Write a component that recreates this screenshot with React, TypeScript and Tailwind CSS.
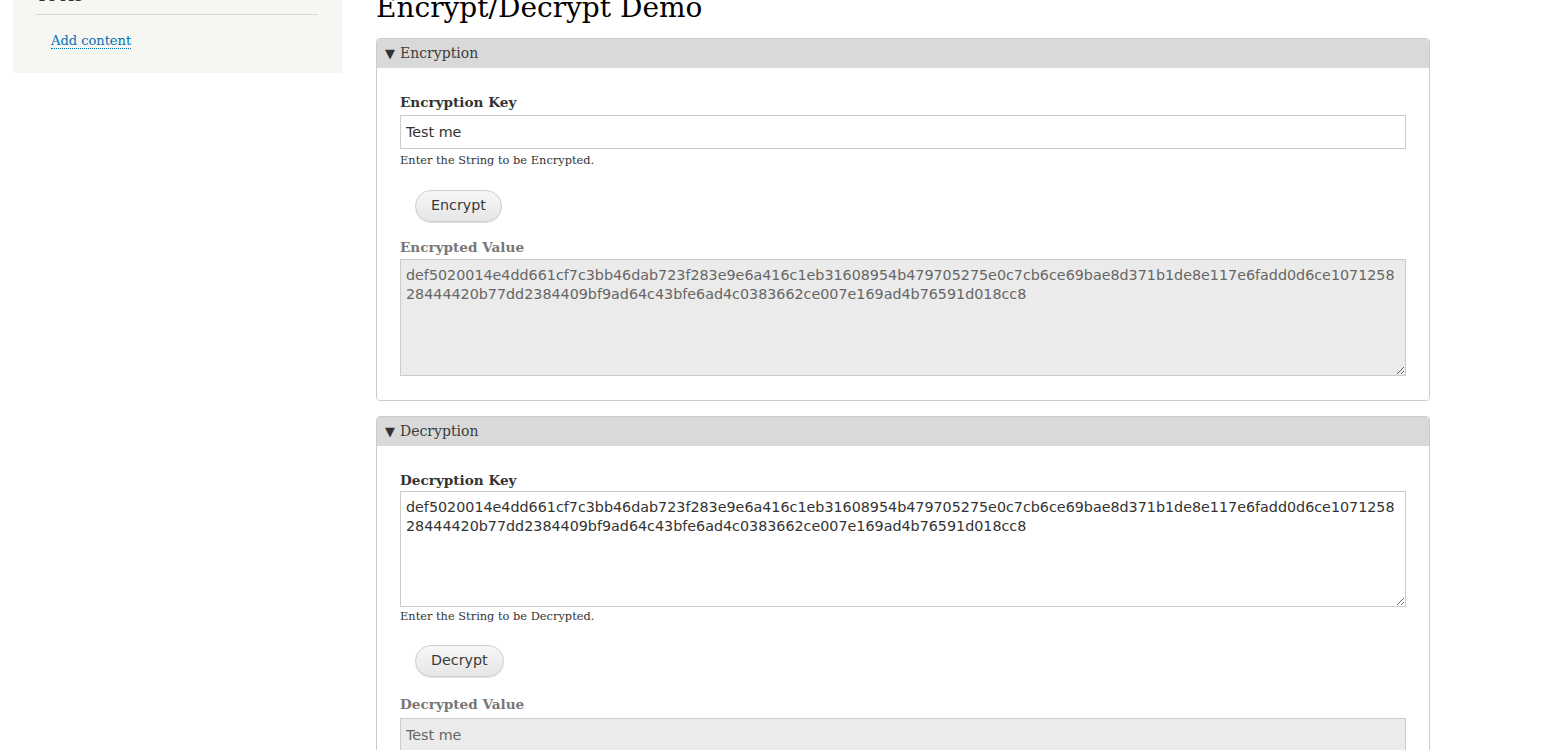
import { useState } from "react"

const serif = "font-['DejaVu_Serif',Georgia,serif]"
const sans = "font-['DejaVu_Sans',Verdana,sans-serif]"

const cipher =
  "def5020014e4dd661cf7c3bb46dab723f283e9e6a416c1eb31608954b479705275e0c7cb6ce69bae8d371b1de8e117e6fadd0d6ce1071258\n28444420b77dd2384409bf9ad64c43bfe6ad4c0383662ce007e169ad4b76591d018cc8"

function Panel({ title, children }: { title: string; children: React.ReactNode }) {
  return (
    <div className="border border-[#cccccc] rounded-[4px] overflow-hidden">
      <div className={`${serif} h-[29px] bg-[#d9d9d9] flex items-center pl-[8px] text-[14px] text-[#3b3b3b]`}>
        <span className="text-[13px] mr-[5px] text-[#333333]">▼</span>
        {title}
      </div>
      <div className="px-[23px] pt-[25px] pb-[24px] bg-white">{children}</div>
    </div>
  )
}

function Label({ text, muted, mb }: { text: string; muted?: boolean; mb: string }) {
  return (
    <div className={`${serif} font-bold text-[13.6px] leading-[18px] ${mb} ${muted ? "text-[#777777]" : "text-[#333333]"}`}>
      {text}
    </div>
  )
}

function Btn({ text }: { text: string }) {
  return (
    <button className={`${sans} ml-[15px] h-[32px] px-[15px] rounded-full border border-[#cfcfcf] bg-gradient-to-b from-[#f7f7f7] to-[#e6e6e6] text-[14.3px] text-[#3a3a3a] shadow-[0_1px_0_#e0e0e0]`}>
      {text}
    </button>
  )
}

export default function App() {
  const [key, setKey] = useState("Test me")
  const [dkey, setDkey] = useState(cipher)

  return (
    <div className="min-h-screen bg-white flex items-start overflow-hidden">
      {/* SIDEBAR */}
      <div className="ml-[13px] w-[329px] -mt-[18px] bg-[#f6f6f2] px-[23px] pb-[22px] shrink-0">
        <h2 className={`${serif} text-[18px] leading-[22px] pt-[2px] text-[#333333] border-b border-[#d6d6d6] pb-[8px] mr-[1px]`}>
          Tools
        </h2>
        <div className="pt-[15px] pl-[15px] text-[13px] leading-[20px]">
          <a
            href="#"
            className={`${serif} text-[13px] text-[#0071b3] border-b border-dotted border-[#0071b3]`}
          >
            Add content
          </a>
        </div>
      </div>

      {/* MAIN */}
      <div className="ml-[34px] w-[1054px] shrink-0 -mt-[10px]">
        <h1 className={`${serif} text-[28px] leading-[36px] text-[#000000] mb-[12px]`}>Encrypt/Decrypt Demo</h1>

        <Panel title="Encryption">
          <Label text="Encryption Key" mb="mb-[4px]" />
          <input
            value={key}
            onChange={e => setKey(e.target.value)}
            className={`${sans} block w-full h-[34px] border border-[#cccccc] px-[5px] text-[14.3px] text-[#333333] outline-none`}
          />
          <div className={`${serif} text-[11.4px] leading-[16px] text-[#333333] mt-[3px]`}>Enter the String to be Encrypted.</div>
          <div className="mt-[22px] mb-[16px] h-[32px] flex">
            <Btn text="Encrypt" />
          </div>
          <Label text="Encrypted Value" muted mb="mb-[3px]" />
          <textarea
            readOnly
            wrap="off"
            value={cipher}
            className={`${sans} block w-full h-[117px] border border-[#cccccc] bg-[#ebebeb] px-[5px] pt-[6px] text-[14.3px] leading-[19px] text-[#666666] overflow-hidden outline-none`}
          />
        </Panel>

        <div className="h-[15px]" />

        <Panel title="Decryption">
          <Label text="Decryption Key" mb="mb-[2px]" />
          <textarea
            wrap="off"
            value={dkey}
            onChange={e => setDkey(e.target.value)}
            className={`${sans} block w-full h-[116px] border border-[#cccccc] bg-white px-[5px] pt-[6px] text-[14.3px] leading-[19px] text-[#333333] overflow-hidden outline-none`}
          />
          <div className={`${serif} text-[11.4px] leading-[16px] text-[#333333] mt-[1px]`}>Enter the String to be Decrypted.</div>
          <div className="mt-[21px] mb-[18px] h-[32px] flex">
            <Btn text="Decrypt" />
          </div>
          <Label text="Decrypted Value" muted mb="mb-[5px]" />
          <input
            readOnly
            value="Test me"
            className={`${sans} block w-full h-[34px] border border-[#cccccc] bg-[#ebebeb] px-[5px] text-[14.3px] text-[#666666] outline-none`}
          />
        </Panel>
      </div>
    </div>
  )
}
